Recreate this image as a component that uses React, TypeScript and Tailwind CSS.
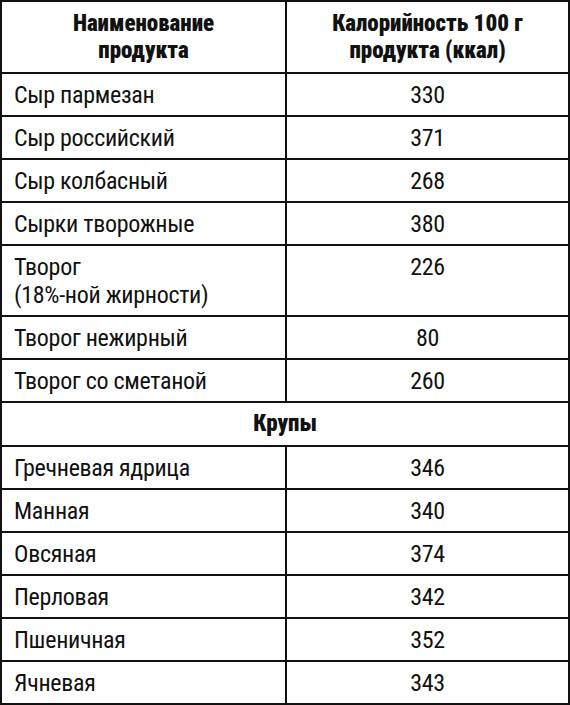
const rows: { name: string[]; kcal: string }[] = [
  { name: ['Сыр пармезан'], kcal: '330' },
  { name: ['Сыр российский'], kcal: '371' },
  { name: ['Сыр колбасный'], kcal: '268' },
  { name: ['Сырки творожные'], kcal: '380' },
  { name: ['Творог', '(18%-ной жирности)'], kcal: '226' },
  { name: ['Творог нежирный'], kcal: '80' },
  { name: ['Творог со сметаной'], kcal: '260' },
];

const groats: { name: string; kcal: string }[] = [
  { name: 'Гречневая ядрица', kcal: '346' },
  { name: 'Манная', kcal: '340' },
  { name: 'Овсяная', kcal: '374' },
  { name: 'Перловая', kcal: '342' },
  { name: 'Пшеничная', kcal: '352' },
  { name: 'Ячневая', kcal: '343' },
];

const font = { fontFamily: '"Roboto Condensed", "Liberation Sans Narrow", Roboto, sans-serif' };

export default function App() {
  const cell = 'border-2 border-[#111] align-top pt-[8px] pb-[7px] text-[24px] leading-[26px] tracking-[-0.3px] text-[#111]';
  const head = 'border-2 border-[#111] px-3 pt-[8px] pb-[8px] text-[23px] leading-[27px] font-black text-center text-[#111]';
  return (
    <div className="w-[570px] bg-white" style={font}>
      <table className="w-full border-collapse table-fixed">
        <colgroup>
          <col className="w-[285px]" />
          <col />
        </colgroup>
        <thead>
          <tr>
            <th className={head}>Наименование<br />продукта</th>
            <th className={head}>Калорийность 100 г<br />продукта (ккал)</th>
          </tr>
        </thead>
        <tbody>
          {rows.map(r => (
            <tr key={r.name.join(' ')}>
              <td className={`${cell} pl-[12px]`}>
                {r.name.map((line, i) => <div key={i} className={i > 0 ? 'mt-[2px]' : ''}>{line}</div>)}
              </td>
              <td className={`${cell} text-center`}>{r.kcal}</td>
            </tr>
          ))}
          <tr>
            <td colSpan={2} className="border-2 border-[#111] pt-[8px] pb-[8px] text-[23px] leading-[26px] font-black text-center text-[#111]">Крупы</td>
          </tr>
          {groats.map(r => (
            <tr key={r.name}>
              <td className={`${cell} pl-[12px]`}>{r.name}</td>
              <td className={`${cell} text-center`}>{r.kcal}</td>
            </tr>
          ))}
        </tbody>
      </table>
    </div>
  );
}
